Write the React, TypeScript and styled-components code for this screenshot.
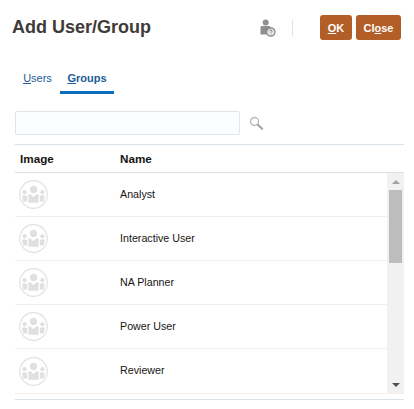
import React, { FC } from "react";
import styled, { createGlobalStyle } from "styled-components";

const GlobalStyle = createGlobalStyle`
  html, body {
    margin: 0;
    padding: 0;
    background: #fff;
  }
  body {
    font-family: "Liberation Sans", Arial, sans-serif;
  }
`;

const Page = styled.div`
  width: 414px;
  height: 409px;
  overflow: hidden;
  padding: 15px 10px 0 15px;
  box-sizing: border-box;
`;

const Header = styled.div`
  display: flex;
  align-items: center;
  height: 25px;
  margin-left: -3px;
  padding-right: 3px;
`;

const Title = styled.h1`
  margin: 0;
  flex: 1;
  font-size: 18px;
  font-weight: 700;
  color: #3f3b38;
`;

const HelpIcon = styled.svg`
  width: 18px;
  height: 18px;
  margin-top: 1px;
`;

const Divider = styled.div`
  width: 1px;
  height: 16px;
  margin: 0 27px 0 15px;
  background: #dfe4ec;
`;

const Button = styled.button<{ $width: number }>`
  width: ${({ $width }) => $width}px;
  height: 25px;
  margin-left: 4px;
  padding: 0;
  border: none;
  border-radius: 3px;
  background: #b35e26;
  color: #fff;
  font-family: inherit;
  font-size: 11px;
  font-weight: 700;
  &:first-of-type {
    margin-left: 0;
  }
  u {
    text-underline-offset: 1px;
  }
`;

const Tabs = styled.div`
  display: flex;
  margin-top: 26px;
  height: 28px;
`;

const Tab = styled.div<{ $active?: boolean; $width: number }>`
  width: ${({ $width }) => $width}px;
  height: 28px;
  box-sizing: border-box;
  padding-top: 5px;
  text-align: center;
  font-size: 11px;
  line-height: 14px;
  font-weight: ${({ $active }) => ($active ? 700 : 400)};
  color: #1b5c97;
  border-bottom: 3px solid ${({ $active }) => ($active ? "#0a6ebd" : "transparent")};
`;

const SearchRow = styled.div`
  display: flex;
  align-items: center;
  margin-top: 17px;
  height: 24px;
`;

const SearchInput = styled.div`
  width: 225px;
  height: 24px;
  box-sizing: border-box;
  background: #fbfcfe;
  border: 1px solid #e3e4e6;
  border-radius: 2px;
`;

const SearchIcon = styled.svg`
  width: 15px;
  height: 15px;
  margin-left: 9px;
`;

const Table = styled.div`
  margin-top: 9px;
  width: 389px;
  border-top: 1px solid #d8e0ea;
`;

const HeadRow = styled.div`
  display: flex;
  align-items: center;
  height: 27px;
  border-bottom: 1px solid #d8e0ea;
  font-size: 11.7px;
  font-weight: 700;
  color: #161513;
`;

const ImageCol = styled.div`
  width: 105px;
  padding-left: 5px;
  box-sizing: border-box;
  display: flex;
  align-items: center;
`;

const AvatarCol = styled(ImageCol)`
  padding-left: 4px;
`;

const NameText = styled.div`
  margin-bottom: 2px;
`;

const Body = styled.div`
  display: flex;
  height: 220px;
  border-bottom: 1px solid #f0f0f0;
`;

const Rows = styled.div`
  flex: 1;
`;

const Row = styled.div`
  display: flex;
  align-items: center;
  height: 44px;
  box-sizing: border-box;
  border-bottom: 1px solid #eeeeee;
  font-size: 10.7px;
  color: #161513;
  &:last-child {
    border-bottom: none;
  }
`;

const Scrollbar = styled.div`
  width: 17px;
  background: #f1f1f1;
  display: flex;
  flex-direction: column;
  align-items: center;
`;

const ArrowButton = styled.div`
  height: 17px;
  width: 17px;
  display: flex;
  align-items: center;
  justify-content: center;
`;

const Track = styled.div`
  flex: 1;
  width: 13px;
`;

const Thumb = styled.div`
  height: 73px;
  background: #bdbdbd;
`;

const Arrow = styled.div<{ $down?: boolean }>`
  width: 0;
  height: 0;
  border-left: 4px solid transparent;
  border-right: 4px solid transparent;
  ${({ $down }) =>
    $down ? "border-top: 4px solid #505050;" : "border-bottom: 4px solid #a3a3a3;"}
`;

const Footer = styled.div`
  margin-top: 5px;
  width: 389px;
  border-top: 1px solid #d8e0ea;
`;

const GroupAvatar: FC = () => (
  <svg width="29" height="29" viewBox="0 0 29 29">
    <circle cx="14.5" cy="14.5" r="13.8" fill="#fff" stroke="#e2e2e2" strokeWidth="1.2" />
    <g fill="#e0e0e0">
      <circle cx="14.5" cy="9.4" r="3.6" />
      <circle cx="5.6" cy="12.2" r="2.1" />
      <circle cx="23.4" cy="12.2" r="2.1" />
      <path d="M9.4 14.6c1.4-.6 2.4-.4 3 .4l2.1 2.2 2.1-2.2c.6-.8 1.6-1 3-.4v8.2H9.4z" />
      <path d="M3.2 15.8c1.2-.8 3.4-.8 4.9 0v5.6H4z" />
      <path d="M25.8 15.8c-1.2-.8-3.4-.8-4.9 0v5.6H25z" />
    </g>
  </svg>
);

const groups = ["Analyst", "Interactive User", "NA Planner", "Power User", "Reviewer"];

const App: FC = () => {
  return (
    <>
      <GlobalStyle />
      <Page>
        <Header>
          <Title>Add User/Group</Title>
          <HelpIcon viewBox="0 0 18 18">
            <circle cx="6.7" cy="3.4" r="3" fill="#8f8f8f" />
            <path d="M1.5 8.5c0-1 .8-1.6 1.8-1.6h6.6c1 0 1.8.6 1.8 1.6V15.5H1.5z" fill="#8f8f8f" />
            <circle cx="11.8" cy="13" r="4.2" fill="#e4e4e4" stroke="#858585" strokeWidth="1.2" />
            <path d="M10.5 12c.2-1.4 2.7-1.4 2.7 0 0 .9-1.3.9-1.4 1.9M11.8 15v.5" fill="none" stroke="#858585" strokeWidth="0.9" />
          </HelpIcon>
          <Divider />
          <Button $width={32}>
            <u>O</u>K
          </Button>
          <Button $width={45}>
            Cl<u>o</u>se
          </Button>
        </Header>
        <Tabs>
          <Tab $width={45}>
            <u>U</u>sers
          </Tab>
          <Tab $active $width={54}>
            <u>G</u>roups
          </Tab>
        </Tabs>
        <SearchRow>
          <SearchInput />
          <SearchIcon viewBox="0 0 15 15">
            <circle cx="5.5" cy="5.5" r="4" fill="#fff" stroke="#b8b8b8" strokeWidth="1.3" />
            <path d="M8.6 8.6l4.6 4.2" stroke="#a0a0a0" strokeWidth="2" strokeLinecap="round" />
          </SearchIcon>
        </SearchRow>
        <Table>
          <HeadRow>
            <ImageCol>Image</ImageCol>
            <div>Name</div>
          </HeadRow>
          <Body>
            <Rows>
              {groups.map((group) => (
                <Row key={group}>
                  <AvatarCol>
                    <GroupAvatar />
                  </AvatarCol>
                  <NameText>{group}</NameText>
                </Row>
              ))}
            </Rows>
            <Scrollbar>
              <ArrowButton>
                <Arrow />
              </ArrowButton>
              <Track>
                <Thumb />
              </Track>
              <ArrowButton>
                <Arrow $down />
              </ArrowButton>
            </Scrollbar>
          </Body>
        </Table>
        <Footer />
      </Page>
    </>
  );
};

export default App;
